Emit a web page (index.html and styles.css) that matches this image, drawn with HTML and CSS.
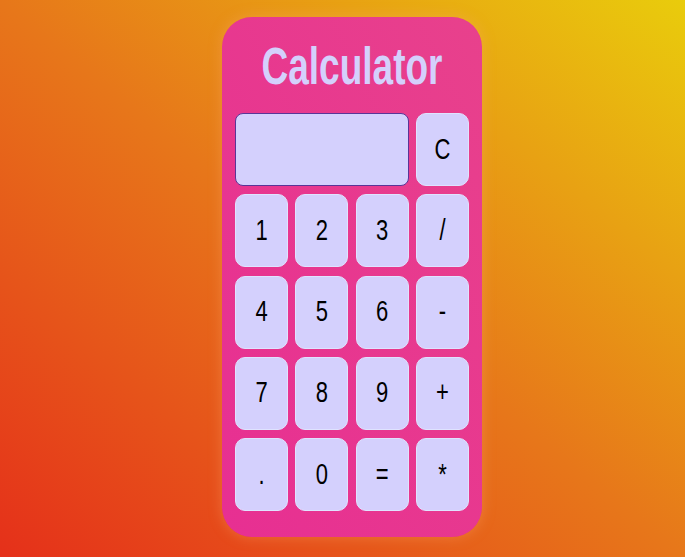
FILE: index.html
```html
<!DOCTYPE html>
<html lang="en">
<head>
<meta charset="utf-8">
<title>Calculator</title>
<link rel="stylesheet" href="styles.css">
</head>
<body>
<div class="calculator">
  <h1 class="title"><span class="stretch">Calculator</span></h1>
  <div class="keys">
    <div class="display"></div>
    <button class="key"><span class="stretch">C</span></button>
    <button class="key"><span class="stretch">1</span></button>
    <button class="key"><span class="stretch">2</span></button>
    <button class="key"><span class="stretch">3</span></button>
    <button class="key"><span class="stretch">/</span></button>
    <button class="key"><span class="stretch">4</span></button>
    <button class="key"><span class="stretch">5</span></button>
    <button class="key"><span class="stretch">6</span></button>
    <button class="key"><span class="stretch">-</span></button>
    <button class="key"><span class="stretch">7</span></button>
    <button class="key"><span class="stretch">8</span></button>
    <button class="key"><span class="stretch">9</span></button>
    <button class="key"><span class="stretch">+</span></button>
    <button class="key"><span class="stretch">.</span></button>
    <button class="key"><span class="stretch">0</span></button>
    <button class="key"><span class="stretch">=</span></button>
    <button class="key"><span class="stretch">*</span></button>
  </div>
</div>
</body>
</html>
```
FILE: styles.css
```css
* { box-sizing: border-box; }
html, body { height: 100%; }
body {
  margin: 0;
  padding: 0 0 3px 19px;
  display: flex;
  justify-content: center;
  align-items: center;
  font-family: "Liberation Sans", Arial, sans-serif;
  background: linear-gradient(to top right, #e5301a 0%, #e7771a 50%, #e9cc0c 100%);
}
.calculator {
  width: 260px;
  height: 520px;
  padding: 0 13px 26px;
  border-radius: 30px;
  background: linear-gradient(to top right, #e72f92, #e8418c);
  box-shadow: 0 0 14px rgba(255, 170, 120, 0.35);
  display: flex;
  flex-direction: column;
}
.title {
  margin: 0;
  height: 96px;
  display: flex;
  justify-content: center;
  align-items: center;
  padding-top: 3px;
  font-size: 37px;
  font-weight: bold;
  color: #d4d0fc;
}
.stretch {
  display: inline-block;
  transform: scaleY(1.4);
}
.keys {
  display: grid;
  grid-template-columns: repeat(4, 1fr);
  grid-auto-rows: 73px;
  column-gap: 7.3px;
  row-gap: 8.25px;
}
.display {
  grid-column: span 3;
  background: #d4d0fd;
  border: 1px solid #5a3597;
  border-radius: 8px;
}
.key {
  margin: 0;
  padding: 0;
  border: 1px solid #dfe3ff;
  border-radius: 10px;
  background: #d4d0fd;
  color: #000;
  font-family: "Liberation Sans", Arial, sans-serif;
  font-size: 22px;
  display: flex;
  justify-content: center;
  align-items: center;
}
.key .stretch { transform: scaleY(1.3); }
```
